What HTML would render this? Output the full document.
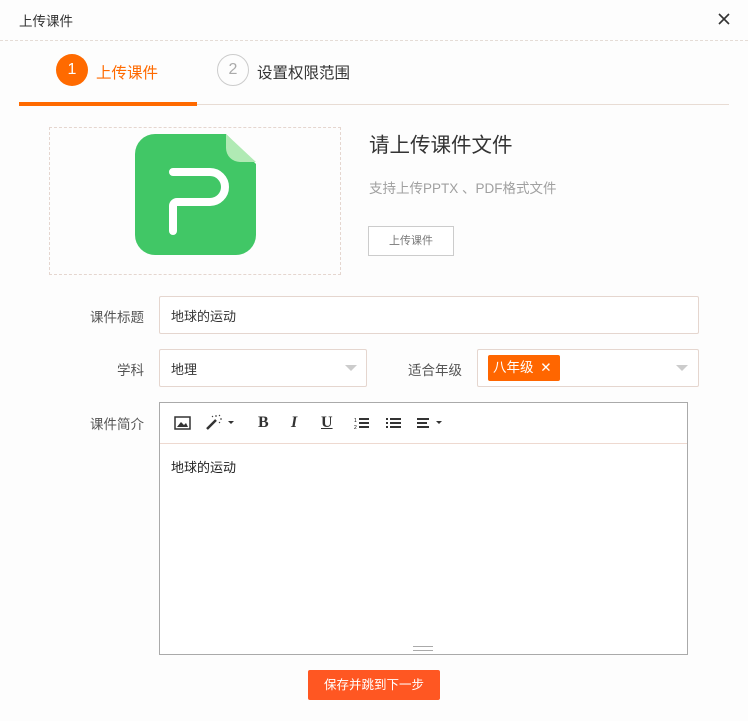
<!DOCTYPE html>
<html><head><meta charset="utf-8"><style>
*{margin:0;padding:0;box-sizing:border-box}
body{width:748px;height:721px;background:#fdfdfd;font-family:"Liberation Sans","Noto Sans CJK SC",sans-serif;position:relative;overflow:hidden;color:#333}
.a{position:absolute}
.lbl{font-size:13.5px;color:#555;text-align:right;width:100px}
.inp{border:1px solid #e5d6cf;background:#fff;border-radius:2px}
.tb{font-family:"Liberation Serif",serif;font-weight:bold;font-size:16px;color:#333}
</style></head><body>
<div class="a" style="left:19px;top:10px;font-size:13.5px;color:#333">上传课件</div>
<svg class="a" style="left:718px;top:13px" width="12" height="12"><path d="M1 1L11 11M11 1L1 11" stroke="#333" stroke-width="1.6"/></svg>
<div class="a" style="left:0;top:40px;width:748px;border-top:1px dashed #e5dcd6"></div>
<div class="a" style="left:56px;top:54px;width:32px;height:32px;border-radius:50%;background:#ff6a00;color:#fff;font-size:16px;text-align:center;line-height:32px">1</div>
<div class="a" style="left:96px;top:61px;font-size:15.5px;color:#ff6a00">上传课件</div>
<div class="a" style="left:217px;top:54px;width:32px;height:32px;border-radius:50%;border:1px solid #ccc;color:#aaa;font-size:16px;text-align:center;line-height:30px">2</div>
<div class="a" style="left:257px;top:61px;font-size:15.5px;color:#333">设置权限范围</div>
<div class="a" style="left:19px;top:104px;width:710px;height:1px;background:#e8dcd4"></div>
<div class="a" style="left:19px;top:102px;width:178px;height:4px;background:#ff6a00"></div>
<div class="a" style="left:49px;top:127px;width:292px;height:148px;border:1px dashed #e5d6cf"></div>
<svg class="a" style="left:135px;top:134px" width="122" height="122">
<path d="M20 0H91L121 30V101A20 20 0 0 1 101 121H20A20 20 0 0 1 0 101V20A20 20 0 0 1 20 0Z" fill="#41c766"/>
<path d="M91 0V14A14 14 0 0 0 105 28H121Z" fill="#b0eab4"/>
<path d="M38 38H75A15 15 0 0 1 75 68H42A4 4 0 0 0 38 72V97" stroke="#fff" stroke-width="8" fill="none" stroke-linecap="round" stroke-linejoin="round"/>
</svg>
<div class="a" style="left:369px;top:128px;font-size:20.5px;color:#333">请上传课件文件</div>
<div class="a" style="left:369px;top:177px;font-size:13.5px;color:#a0a0a0">支持上传PPTX 、PDF格式文件</div>
<div class="a" style="left:368px;top:226px;width:86px;height:30px;border:1px solid #ccc;font-size:11px;color:#777;text-align:center;line-height:28px;background:#fff">上传课件</div>
<div class="a lbl" style="left:44px;top:306px">课件标题</div>
<div class="a inp" style="left:159px;top:296px;width:540px;height:38px"></div>
<div class="a" style="left:171px;top:306px;font-size:13px">地球的运动</div>
<div class="a lbl" style="left:44px;top:359px">学科</div>
<div class="a inp" style="left:159px;top:349px;width:208px;height:38px"></div>
<div class="a" style="left:171px;top:359px;font-size:13px">地理</div>
<svg class="a" style="left:345px;top:365px" width="12" height="6"><path d="M0 0H12L6 6Z" fill="#ccc"/></svg>
<div class="a lbl" style="left:362px;top:359px">适合年级</div>
<div class="a inp" style="left:477px;top:349px;width:222px;height:38px"></div>
<div class="a" style="left:488px;top:355px;width:72px;height:26px;background:#ff6600;border-radius:2px;color:#fff;font-size:13.5px;line-height:26px;padding-left:5px">八年级 <span style="margin-left:3px">✕</span></div>
<svg class="a" style="left:676px;top:365px" width="12" height="6"><path d="M0 0H12L6 6Z" fill="#ccc"/></svg>
<div class="a lbl" style="left:44px;top:413px">课件简介</div>
<div class="a" style="left:159px;top:402px;width:529px;height:253px;border:1px solid #aaa;background:#fff"></div>
<div class="a" style="left:160px;top:443px;width:527px;height:1px;background:#eed9d0"></div>
<svg class="a" style="left:174px;top:416px" width="18" height="14"><rect x="1" y="1" width="15" height="12" fill="none" stroke="#333" stroke-width="1.5"/><path d="M3 11L7 6L10 9L12 7L14 11Z" fill="#333"/></svg>
<svg class="a" style="left:205px;top:413px" width="30" height="18"><path d="M2 16L11 7" stroke="#333" stroke-width="2.5"/><path d="M11 2V4M15 6H17M14 3L15 2M8 4L7 3M14 9L15 10" stroke="#333" stroke-width="1"/><path d="M23 8H29L26 11Z" fill="#333"/></svg>
<div class="a tb" style="left:258px;top:414px">B</div>
<div class="a tb" style="left:291px;top:414px;font-style:italic">I</div>
<div class="a tb" style="left:321px;top:414px;text-decoration:underline;font-weight:bold">U</div>
<svg class="a" style="left:354px;top:416px" width="16" height="14"><path d="M5 3H15M5 7H15M5 11H15" stroke="#333" stroke-width="2"/><text x="0" y="6" font-size="5" font-family="Liberation Sans">1</text><text x="0" y="13" font-size="5" font-family="Liberation Sans">2</text></svg>
<svg class="a" style="left:386px;top:416px" width="16" height="14"><path d="M4 3H15M4 7H15M4 11H15M0 3H2M0 7H2M0 11H2" stroke="#333" stroke-width="2"/></svg>
<svg class="a" style="left:417px;top:416px" width="28" height="14"><path d="M0 3H12M0 7H10M0 11H12" stroke="#333" stroke-width="2"/><path d="M19 5H25L22 8Z" fill="#333"/></svg>
<div class="a" style="left:171px;top:457px;font-size:13px;color:#222">地球的运动</div>
<div class="a" style="left:413px;top:646px;width:20px;height:5px;border-top:1px solid #aaa;border-bottom:1px solid #aaa"></div>
<div class="a" style="left:308px;top:670px;width:132px;height:30px;background:#ff5722;border-radius:2px;color:#fff;font-size:12.5px;text-align:center;line-height:30px">保存并跳到下一步</div>
</body></html>
